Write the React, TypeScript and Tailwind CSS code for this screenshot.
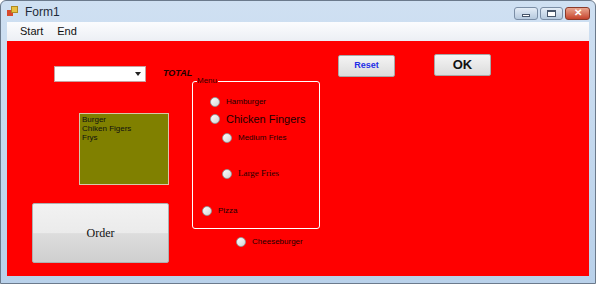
import { FC } from 'react';

const Radio: FC<{ label: string; x: number; y: number; className?: string }> = ({ label, x, y, className }) => (
  <div className="absolute flex items-center gap-[6px]" style={{ left: x, top: y }}>
    <span className="w-[10px] h-[10px] rounded-full border border-[#9a9a9a] bg-gradient-to-br from-white to-[#d4d4d4] shrink-0" />
    <span className={className ?? "text-[8px] text-[#1a0000] font-['Liberation_Sans',sans-serif]"}>{label}</span>
  </div>
);

const App: FC = () => {
  return (
    <div className="w-[602px] h-[286px] bg-white font-['Liberation_Sans',sans-serif]">
      <div className="w-[596px] h-[284px] border border-[#6b7a8c] rounded-t-[6px] bg-gradient-to-b from-[#cfe0f2] to-[#b9d1ea] flex flex-col">
        {/* Title bar */}
        <div className="h-[21px] flex items-center pl-[6px] pr-[5px]">
          <div className="relative w-[12px] h-[11px] mr-[6px]">
            <span className="absolute left-0 top-[4px] w-[6px] h-[6px] bg-[#d84a2c]" />
            <span className="absolute left-[4px] top-0 w-[7px] h-[7px] bg-[#e8c244] border border-[#b08a20]" />
          </div>
          <span className="text-[12px] text-[#1e2b3a]">Form1</span>
          <div className="ml-auto flex gap-[2px] mt-[3px]">
            <div className="w-[24px] h-[13px] rounded-[3px] border border-[#7b8ea6] bg-gradient-to-b from-[#e4edf7] to-[#b6c9de] flex items-center justify-center">
              <span className="w-[8px] h-[3px] bg-white border border-[#47556a] mt-[4px]" />
            </div>
            <div className="w-[23px] h-[13px] rounded-[3px] border border-[#7b8ea6] bg-gradient-to-b from-[#e4edf7] to-[#b6c9de] flex items-center justify-center">
              <span className="w-[9px] h-[7px] border border-[#47556a] border-t-2 bg-white" />
            </div>
            <div className="w-[25px] h-[13px] rounded-[3px] border border-[#8a3a2a] bg-gradient-to-b from-[#e8a48e] to-[#c5422b] flex items-center justify-center">
              <span className="text-white text-[10px] font-bold leading-none">✕</span>
            </div>
          </div>
        </div>
        {/* Menu bar */}
        <div className="mx-[6px] h-[19px] bg-gradient-to-b from-[#fbfcfe] to-[#eceff4] flex items-center gap-[14px] pl-[13px] text-[11px] text-[#111]">
          <span>Start</span>
          <span>End</span>
        </div>
        {/* Client area */}
        <div className="mx-[6px] flex-1 bg-[#ff0000] relative">
          {/* Combobox */}
          <div className="absolute left-[47px] top-[25px] w-[92px] h-[16px] bg-white border border-[#c9a0a0] flex items-center justify-end pr-[4px]">
            <span className="w-0 h-0 border-l-[3px] border-r-[3px] border-t-[4px] border-l-transparent border-r-transparent border-t-[#222]" />
          </div>
          <span className="absolute left-[156px] top-[26px] text-[9px] font-bold italic text-[#200000]">TOTAL</span>

          {/* Reset / OK */}
          <button className="absolute left-[331px] top-[14px] w-[57px] h-[22px] rounded-[2px] border border-[#a8a8a8] bg-gradient-to-b from-[#f4f4f4] to-[#dcdcdc] text-[9px] font-bold text-[#1f2fe6]">
            Reset
          </button>
          <button className="absolute left-[427px] top-[13px] w-[57px] h-[22px] rounded-[2px] border border-[#a8a8a8] bg-gradient-to-b from-[#f4f4f4] to-[#dcdcdc] text-[13px] font-bold text-[#111]">
            OK
          </button>

          {/* Group box */}
          <div className="absolute left-[185px] top-[40px] w-[128px] h-[148px] border border-white rounded-[3px]">
            <span className="absolute left-[4px] top-[-6px] bg-[#ff0000] pr-[1px] text-[8px] leading-[10px] text-[#300000]">Menu</span>
          </div>
          <Radio label="Hamburger" x={203} y={55} />
          <Radio
            label="Chicken Fingers"
            x={203}
            y={71}
            className="text-[11px] text-[#1a0000] font-['Liberation_Sans',sans-serif] leading-[14px]"
          />
          <Radio label="Medium Fries" x={215} y={91} />
          <Radio
            label="Large Fries"
            x={215}
            y={126}
            className="text-[9px] text-[#1a0000] font-['Liberation_Serif',serif]"
          />
          <Radio label="Pizza" x={195} y={164} />
          <Radio label="Cheeseburger" x={229} y={195} />

          {/* List box */}
          <div className="absolute left-[72px] top-[72px] w-[90px] h-[72px] bg-[#808000] border border-[#d8c8a8] pl-[2px] pt-[1px] text-[8px] leading-[9px] text-[#111]">
            <div>Burger</div>
            <div>Chiken Figers</div>
            <div>Frys</div>
          </div>

          {/* Order */}
          <button className="absolute left-[25px] top-[162px] w-[137px] h-[60px] rounded-[2px] border border-[#b0b0b0] bg-[linear-gradient(to_bottom,#f2f2f2_0%,#ebebeb_50%,#dddddd_51%,#cfcfcf_100%)] text-[12px] text-[#111] font-['Liberation_Serif',serif]">
            Order
          </button>
        </div>
        <div className="h-[7px]" />
      </div>
    </div>
  );
};

export default App;
